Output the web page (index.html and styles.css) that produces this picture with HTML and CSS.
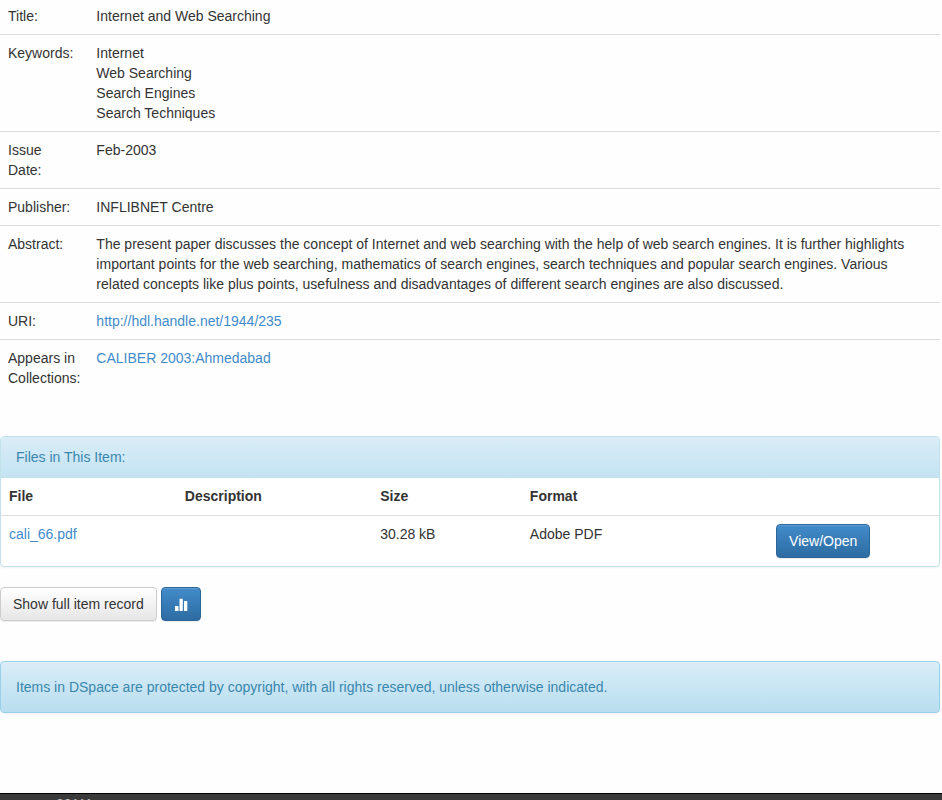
FILE: index.html
```html
<!DOCTYPE html>
<html lang="en">
<head>
    <meta charset="UTF-8">
    <meta name="viewport" content="width=device-width, initial-scale=1.0">
    <title>Internet and Web Searching</title>
    <link rel="stylesheet" href="styles.css">
</head>
<body>

    <main class="container">
        <table class="table item-table">
            <tr>
                <th scope="row">Title:</th>
                <td>Internet and Web Searching</td>
            </tr>
            <tr>
                <th scope="row">Keywords:</th>
                <td>Internet<br>Web Searching<br>Search Engines<br>Search Techniques</td>
            </tr>
            <tr>
                <th scope="row">Issue<br>Date:</th>
                <td>Feb-2003</td>
            </tr>
            <tr>
                <th scope="row">Publisher:</th>
                <td>INFLIBNET Centre</td>
            </tr>
            <tr>
                <th scope="row">Abstract:</th>
                <td>The present paper discusses the concept of Internet and web searching with the help of web search engines. It is further highlights important points for the web searching, mathematics of search engines, search techniques and popular search engines. Various related concepts like plus points, usefulness and disadvantages of different search engines are also discussed.</td>
            </tr>
            <tr>
                <th scope="row">URI:</th>
                <td><a href="#">http://hdl.handle.net/1944/235</a></td>
            </tr>
            <tr>
                <th scope="row">Appears in Collections:</th>
                <td><a href="#">CALIBER 2003:Ahmedabad</a></td>
            </tr>
        </table>

        <div class="panel">
            <div class="panel-heading">Files in This Item:</div>
            <table class="table files-table">
                <tr>
                    <th scope="col">File</th>
                    <th scope="col">Description</th>
                    <th scope="col">Size</th>
                    <th scope="col">Format</th>
                    <th></th>
                </tr>
                <tr>
                    <td><a href="#">cali_66.pdf</a></td>
                    <td></td>
                    <td>30.28 kB</td>
                    <td>Adobe PDF</td>
                    <td class="file-action"><a class="btn btn-primary" href="#">View/Open</a></td>
                </tr>
            </table>
        </div>

        <div class="actions">
            <a class="btn btn-default" href="#">Show full item record</a>
            <a class="btn btn-primary" href="#" aria-label="Statistics">
                <svg class="icon" viewBox="0 0 14 14" aria-hidden="true">
                    <path d="M1 9.5q0-.5.5-.5h2.5q.5 0 .5.5V14H1zM5.5 2.2q0-.5.5-.5h2.3q.5 0 .5.5V14H5.5zM10 4.5q0-.5.5-.5h2.3q.5 0 .5.5V14H10z"/>
                </svg>
            </a>
        </div>

        <p class="alert">Items in DSpace are protected by copyright, with all rights reserved, unless otherwise indicated.</p>
    </main>

    <footer class="footer">
        <span class="footer-text">20111</span>
    </footer>

</body>
</html>
```
FILE: styles.css
```css
* {
    box-sizing: border-box;
}

body {
    height: 100vh;
    margin: 0;
    overflow: hidden;
    font-family: "Liberation Sans", Arial, sans-serif;
    font-size: 14px;
    line-height: 20px;
    color: #333;
    background-color: #fefefe;
}

a {
    color: #428bca;
    text-decoration: none;
}

.container {
    margin-right: 2px;
}

.table {
    width: 100%;
    border-collapse: collapse;
}

.table th, .table td {
    padding: 8px;
    border-top: 1px solid #ddd;
    text-align: left;
    vertical-align: top;
}

.item-table {
    margin-bottom: 40px;
}

.item-table th {
    width: 88px;
    font-weight: normal;
}

.item-table tr:first-child th, .item-table tr:first-child td {
    padding-top: 6px;
    border-top: none;
}

.panel {
    margin-bottom: 20px;
    border: 1px solid #c2e2ea;
    border-radius: 4px;
    background-color: #fff;
    box-shadow: 0 1px 2px rgba(0, 0, 0, 0.05);
}

.panel-heading {
    padding: 10px 15px;
    border-bottom: 1px solid #c2e2ea;
    border-radius: 3px 3px 0 0;
    color: #3a87ad;
    background-image: linear-gradient(#d9edf7, #c4e3f3);
}

.files-table {
    border-collapse: separate;
    border-spacing: 0;
}

.files-table th {
    padding-bottom: 9px;
    border-top: none;
}

.files-table .file-action {
    text-align: center;
}

.btn {
    display: inline-block;
    padding: 6px 12px;
    border: 1px solid #ccc;
    border-radius: 4px;
    vertical-align: middle;
    box-shadow: inset 0 1px 0 rgba(255, 255, 255, 0.15), 0 1px 1px rgba(0, 0, 0, 0.075);
}

.btn-default {
    color: #333;
    background-image: linear-gradient(#fff, #e6e6e6);
}

.btn-primary {
    color: #fff;
    border-color: #2b669a;
    background-image: linear-gradient(#428bca, #2d6ca2);
}

.actions {
    display: flex;
    gap: 4px;
    margin-bottom: 40px;
}

.icon {
    display: block;
    width: 14px;
    height: 14px;
    margin: 3px 0;
    fill: #fff;
}

.alert {
    margin: 0 0 80px;
    padding: 15px;
    border: 1px solid #9acfea;
    border-radius: 4px;
    color: #3a87ad;
    background-image: linear-gradient(#d9edf7, #b9def0);
    box-shadow: inset 0 1px 0 rgba(255, 255, 255, 0.25), 0 1px 2px rgba(0, 0, 0, 0.05);
}

.footer {
    padding: 0 56px 20px;
    border-top: 1px solid #000;
    color: #bbb;
    background-color: #3a3a3a;
}
```
